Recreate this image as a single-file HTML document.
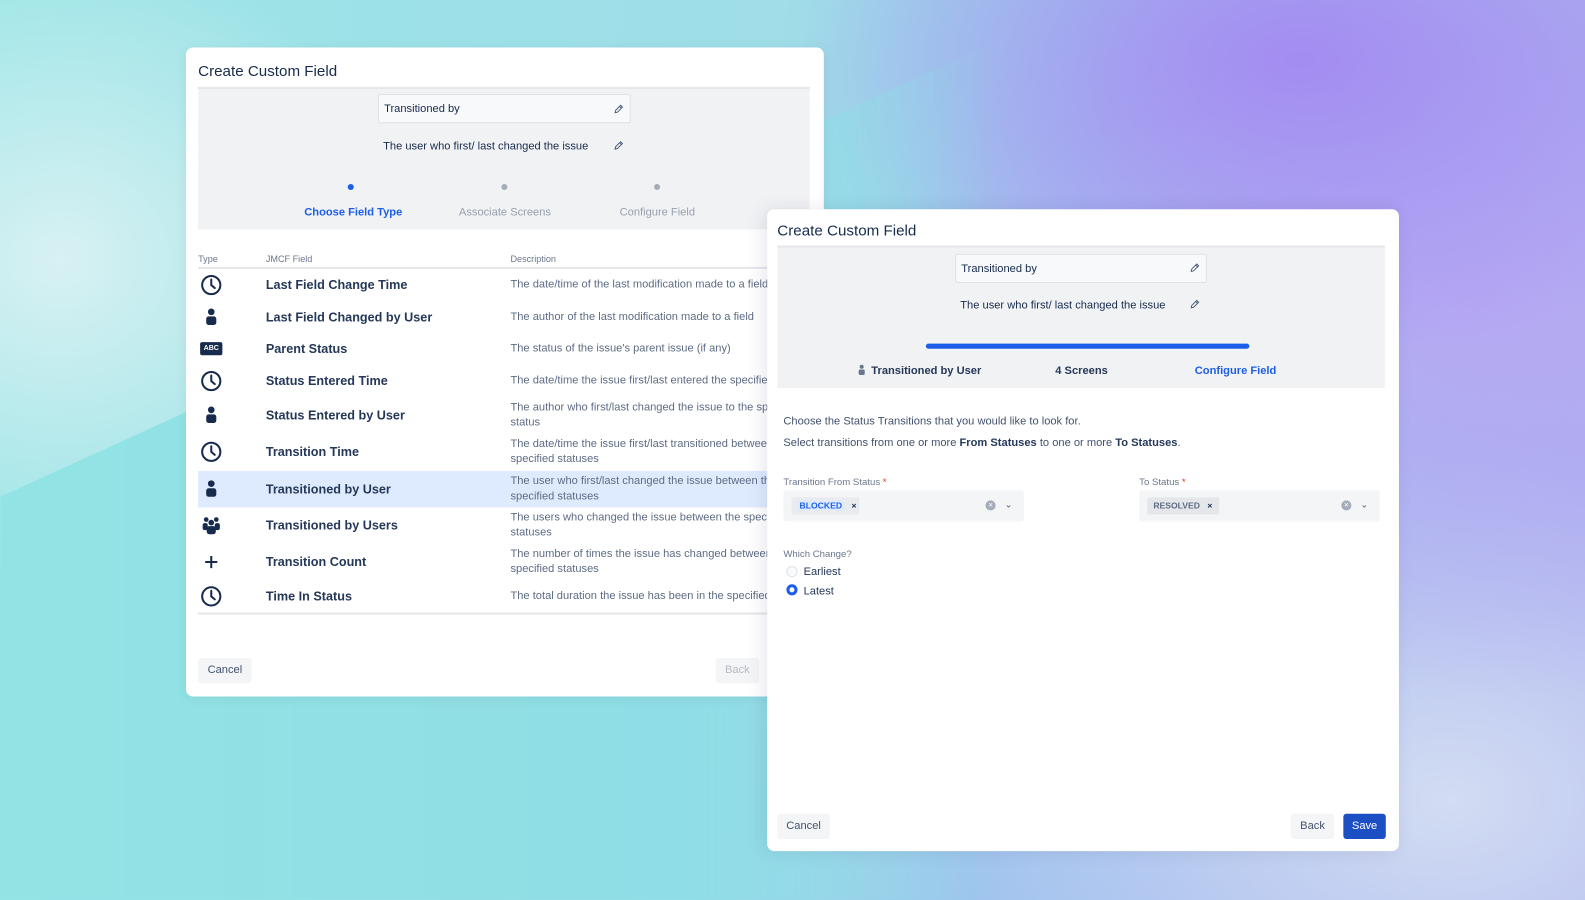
<!DOCTYPE html>
<html><head><meta charset="utf-8"><style>
*{box-sizing:border-box;margin:0;padding:0}
html,body{width:1585px;height:900px;overflow:hidden}
body{font-family:"Liberation Sans",sans-serif;color:#172b4d;position:relative;
background:
radial-gradient(ellipse 500px 300px at 1300px 60px,#a48cf1 0%,rgba(164,140,241,0) 100%),
radial-gradient(ellipse 600px 400px at 1480px 300px,#b6a8f3 0%,rgba(182,168,243,0) 100%),
radial-gradient(ellipse 500px 350px at 1450px 800px,#d2dcf2 0%,rgba(210,220,242,0) 100%),
radial-gradient(ellipse 350px 320px at 60px 260px,#d8f1f3 0%,rgba(216,241,243,0) 100%),
linear-gradient(100deg,#9ae5e6 0%,#9fdde8 45%,#a0c4ee 65%,#aab0f0 100%);}
#wedge{position:absolute;left:0;top:0;width:1000px;height:900px;background:linear-gradient(90deg,#92e4e4,#8fdde6 70%,rgba(143,221,230,0));clip-path:polygon(0 497px,1000px 40px,1000px 900px,0 900px);filter:blur(1px)}
#w{position:absolute;left:0;top:0;width:1568px;height:890px;transform:scale(1.0108);transform-origin:0 0}
.p{position:absolute;background:#fff;border-radius:7px}
.a{position:absolute}
.t{font-size:15px;color:#172b4d}
.g{position:absolute;background:#f1f2f4}
.inp{position:absolute;background:#f8f9fb;border:1px solid #dfe1e6;border-radius:2px;font-size:11px;padding:8px 5px;color:#172b4d}
.pen{position:absolute;width:10px;height:10px}
.s{font-size:11px;color:#42526e}
.row{position:absolute;left:196px;width:600px;height:34px}
.row .n{position:absolute;left:67px;font-size:12.5px;font-weight:bold;color:#253858;top:50%;transform:translateY(-50%)}
.row .d{position:absolute;left:309px;width:300px;font-size:11px;color:#5e6c84;line-height:15px;top:50%;transform:translateY(-50%);white-space:normal}
.row .i{position:absolute;left:2px;top:50%;transform:translateY(-50%);width:22px;height:22px}
.btn{position:absolute;background:#f4f5f7;border-radius:3px;font-size:11px;color:#42526e;text-align:center;line-height:25px;height:25px}
</style></head><body><div id="wedge"></div><div id="w">
<svg width="0" height="0" style="position:absolute"><defs>
<symbol id="clk" viewBox="0 0 22 22"><circle cx="11" cy="11" r="9" fill="none" stroke="#172b4d" stroke-width="2"/><path d="M11 5.5V11l3.5 3" fill="none" stroke="#172b4d" stroke-width="2" stroke-linecap="round"/></symbol>
<symbol id="usr" viewBox="0 0 22 22"><circle cx="11" cy="5.5" r="3.3" fill="#172b4d"/><rect x="6" y="10" width="10" height="8.5" rx="2.5" fill="#172b4d"/></symbol>
<symbol id="pn" viewBox="0 0 10 10"><path d="M1.5 8.5l.5-2.3L7 1.2l1.8 1.8-5 5z M6 2.3l1.7 1.7" fill="none" stroke="#42526e" stroke-width=".9"/></symbol>
</defs></svg>

<!-- left panel -->
<div class="p" style="left:184px;top:47px;width:631px;height:642px;box-shadow:0 2px 12px rgba(0,0,0,.06)">
</div>
<div class="a t" style="left:196px;top:62px">Create Custom Field</div>
<div class="g" style="left:196px;top:86px;width:605px;height:141px;border-top:2px solid #e4e6ea"></div>
<div class="inp" style="left:374px;top:93px;width:250px;height:29px">Transitioned by</div>
<svg class="pen" style="left:607px;top:103px"><use href="#pn"/></svg>
<div class="a s" style="left:379px;top:139px;color:#172b4d">The user who first/ last changed the issue</div>
<svg class="pen" style="left:607px;top:139px"><use href="#pn"/></svg>
<div class="a" style="left:344px;top:182px;width:6px;height:6px;border-radius:50%;background:#1d5ee8"></div>
<div class="a" style="left:496px;top:182px;width:6px;height:6px;border-radius:50%;background:#a5adba"></div>
<div class="a" style="left:647px;top:182px;width:6px;height:6px;border-radius:50%;background:#a5adba"></div>
<div class="a" style="left:301px;top:204px;font-size:11px;font-weight:bold;color:#1d5ee8">Choose Field Type</div>
<div class="a" style="left:454px;top:204px;font-size:11px;color:#97a0af">Associate Screens</div>
<div class="a" style="left:613px;top:204px;font-size:11px;color:#97a0af">Configure Field</div>
<div class="a" style="left:196px;top:251px;font-size:9px;color:#6b778c">Type</div>
<div class="a" style="left:263px;top:251px;font-size:9px;color:#6b778c">JMCF Field</div>
<div class="a" style="left:505px;top:251px;font-size:9px;color:#6b778c">Description</div>
<div class="a" style="left:196px;top:264px;width:605px;height:2px;background:#e4e6ea"></div>

<div class="row" style="top:265px"><svg class="i"><use href="#clk"/></svg><span class="n">Last Field Change Time</span><span class="d" style="white-space:nowrap">The date/time of the last modification made to a field</span></div>
<div class="row" style="top:297px"><svg class="i"><use href="#usr"/></svg><span class="n">Last Field Changed by User</span><span class="d">The author of the last modification made to a field</span></div>
<div class="row" style="top:328px"><div class="i" style="width:22px;height:13px;background:#172b4d;border-radius:2px;color:#fff;font-size:7px;font-weight:bold;text-align:center;line-height:13px">ABC</div><span class="n">Parent Status</span><span class="d">The status of the issue's parent issue (if any)</span></div>
<div class="row" style="top:360px"><svg class="i"><use href="#clk"/></svg><span class="n">Status Entered Time</span><span class="d" style="white-space:nowrap">The date/time the issue first/last entered the specified</span></div>
<div class="row" style="top:394px"><svg class="i"><use href="#usr"/></svg><span class="n">Status Entered by User</span><span class="d">The author who first/last changed the issue to the specified<br>status</span></div>
<div class="row" style="top:430px"><svg class="i"><use href="#clk"/></svg><span class="n">Transition Time</span><span class="d">The date/time the issue first/last transitioned between the<br>specified statuses</span></div>
<div class="row" style="top:466px;height:36px;background:#deebff"><svg class="i"><use href="#usr"/></svg><span class="n">Transitioned by User</span><span class="d">The user who first/last changed the issue between the<br>specified statuses</span></div>
<div class="row" style="top:503px"><svg class="i" viewBox="0 0 22 22"><circle cx="6" cy="5" r="2.3" fill="#172b4d"/><circle cx="16" cy="5" r="2.3" fill="#172b4d"/><circle cx="11" cy="8" r="2.8" fill="#172b4d"/><rect x="2.5" y="8.5" width="5" height="7" rx="2" fill="#172b4d"/><rect x="14.5" y="8.5" width="5" height="7" rx="2" fill="#172b4d"/><rect x="6.5" y="11.5" width="9" height="8" rx="2.5" fill="#172b4d"/></svg><span class="n">Transitioned by Users</span><span class="d">The users who changed the issue between the specified<br>statuses</span></div>
<div class="row" style="top:539px"><svg class="i" viewBox="0 0 22 22"><path d="M11 5v12M5 11h12" stroke="#172b4d" stroke-width="2"/></svg><span class="n">Transition Count</span><span class="d">The number of times the issue has changed between the<br>specified statuses</span></div>
<div class="row" style="top:573px"><svg class="i"><use href="#clk"/></svg><span class="n">Time In Status</span><span class="d" style="white-space:nowrap">The total duration the issue has been in the specified</span></div>
<div class="a" style="left:196px;top:606px;width:605px;height:2px;background:#e4e6ea"></div>
<div class="btn" style="left:196px;top:651px;width:53px">Cancel</div>
<div class="btn" style="left:708px;top:651px;width:43px;color:#b3bac5">Back</div>

<!-- right panel -->
<div class="p" style="left:759px;top:207px;width:625px;height:635px;box-shadow:-4px 0 18px rgba(30,40,80,.10)"></div>
<div class="a t" style="left:769px;top:220px">Create Custom Field</div>
<div class="g" style="left:769px;top:243px;width:601px;height:141px;border-top:2px solid #e4e6ea"></div>
<div class="inp" style="left:945px;top:251px;width:249px;height:29px">Transitioned by</div>
<svg class="pen" style="left:1177px;top:260px"><use href="#pn"/></svg>
<div class="a s" style="left:950px;top:296px;color:#172b4d">The user who first/ last changed the issue</div>
<svg class="pen" style="left:1177px;top:296px"><use href="#pn"/></svg>
<div class="a" style="left:916px;top:340px;width:320px;height:5px;border-radius:3px;background:#1d5ee8"></div>
<svg class="a" style="left:848px;top:360px" width="9" height="12" viewBox="0 0 9 12"><circle cx="4.5" cy="2.8" r="2" fill="#6b778c"/><rect x="1.5" y="5.5" width="6" height="5.5" rx="1.5" fill="#6b778c"/></svg>
<div class="a" style="left:862px;top:361px;font-size:11px;font-weight:bold;color:#253858">Transitioned by User</div>
<div class="a" style="left:1044px;top:361px;font-size:11px;font-weight:bold;color:#253858">4 Screens</div>
<div class="a" style="left:1182px;top:361px;font-size:11px;font-weight:bold;color:#1d5ee8">Configure Field</div>
<div class="a s" style="left:775px;top:411px">Choose the Status Transitions that you would like to look for.</div>
<div class="a s" style="left:775px;top:432px">Select transitions from one or more <b style="color:#253858">From Statuses</b> to one or more <b style="color:#253858">To Statuses</b>.</div>
<div class="a" style="left:775px;top:472px;font-size:9.5px;color:#6b778c">Transition From Status <span style="color:#de350b">*</span></div>
<div class="a" style="left:1127px;top:472px;font-size:9.5px;color:#6b778c">To Status <span style="color:#de350b">*</span></div>
<div class="a" style="left:775px;top:485px;width:238px;height:31px;background:#f4f5f7;border-radius:3px"></div>
<div class="a" style="left:783px;top:492px;width:67px;height:17px;background:#e9ebee;border-radius:2px;font-size:8.5px;font-weight:bold;line-height:17px;padding-left:6px"><span style="color:#1d5ee8;background:#deebff;padding:0 2px">BLOCKED</span> <span style="margin-left:5px">×</span></div>
<div class="a" style="left:975px;top:495px;width:10px;height:10px;border-radius:50%;background:#a5adba;color:#fff;font-size:8px;line-height:10px;text-align:center">×</div>
<div class="a" style="left:994px;top:494px;font-size:9px;color:#42526e">⌄</div>
<div class="a" style="left:1127px;top:485px;width:238px;height:31px;background:#f4f5f7;border-radius:3px"></div>
<div class="a" style="left:1135px;top:492px;width:71px;height:17px;background:#e4e6ea;border-radius:2px;font-size:8.5px;font-weight:bold;line-height:17px;padding-left:6px;color:#5e6c84">RESOLVED <span style="margin-left:5px;color:#172b4d">×</span></div>
<div class="a" style="left:1327px;top:495px;width:10px;height:10px;border-radius:50%;background:#a5adba;color:#fff;font-size:8px;line-height:10px;text-align:center">×</div>
<div class="a" style="left:1346px;top:494px;font-size:9px;color:#42526e">⌄</div>
<div class="a" style="left:775px;top:543px;font-size:9.5px;color:#6b778c">Which Change?</div>
<div class="a" style="left:778px;top:560px;width:11px;height:11px;border-radius:50%;border:1px solid #dfe1e6;background:#fafbfc"></div>
<div class="a" style="left:795px;top:560px;font-size:11px;color:#253858">Earliest</div>
<div class="a" style="left:778px;top:578px;width:11px;height:11px;border-radius:50%;border:3.5px solid #1d5ee8;background:#fff"></div>
<div class="a" style="left:795px;top:579px;font-size:11px;color:#253858">Latest</div>
<div class="btn" style="left:769px;top:805px;width:52px">Cancel</div>
<div class="btn" style="left:1277px;top:805px;width:43px">Back</div>
<div class="btn" style="left:1329px;top:805px;width:42px;background:#1d4fc4;color:#fff">Save</div>
</div></body></html>
